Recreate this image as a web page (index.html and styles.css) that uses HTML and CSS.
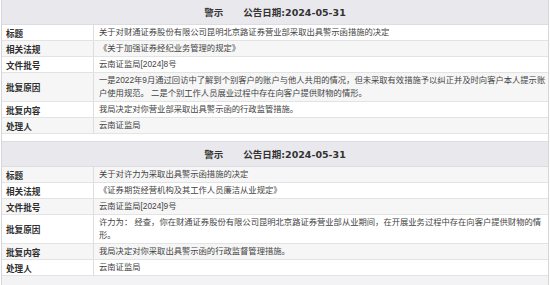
FILE: index.html
```html
<!DOCTYPE html>
<html lang="zh-CN">
<head>
<meta charset="utf-8">
<title>警示公告</title>
<link rel="stylesheet" href="styles.css">
</head>
<body>
<div class="board">
  <section class="notice">
    <div class="notice-head"><span>警示</span><span class="date">公告日期:2024-05-31</span></div>
    <div class="row"><div class="label">标题</div><div class="value">关于对财通证券股份有限公司昆明北京路证券营业部采取出具警示函措施的决定</div></div>
    <div class="row"><div class="label">相关法规</div><div class="value">《关于加强证券经纪业务管理的规定》</div></div>
    <div class="row"><div class="label">文件批号</div><div class="value">云南证监局[2024]8号</div></div>
    <div class="row"><div class="label">批复原因</div><div class="value">一是2022年9月通过回访中了解到个别客户的账户与他人共用的情况，但未采取有效措施予以纠正并及时向客户本人提示账户使用规范。 二是个别工作人员展业过程中存在向客户提供财物的情形。</div></div>
    <div class="row"><div class="label">批复内容</div><div class="value">我局决定对你营业部采取出具警示函的行政监管措施。</div></div>
    <div class="row"><div class="label">处理人</div><div class="value">云南证监局</div></div>
  </section>
  <div class="gap"></div>
  <section class="notice alt">
    <div class="notice-head"><span>警示</span><span class="date">公告日期:2024-05-31</span></div>
    <div class="row"><div class="label">标题</div><div class="value">关于对许力为采取出具警示函措施的决定</div></div>
    <div class="row"><div class="label">相关法规</div><div class="value">《证券期货经营机构及其工作人员廉洁从业规定》</div></div>
    <div class="row"><div class="label">文件批号</div><div class="value">云南证监局[2024]9号</div></div>
    <div class="row"><div class="label">批复原因</div><div class="value">许力为： 经查，你在财通证券股份有限公司昆明北京路证券营业部从业期间，在开展业务过程中存在向客户提供财物的情形。</div></div>
    <div class="row"><div class="label">批复内容</div><div class="value">我局决定对你采取出具警示函的行政监督管理措施。</div></div>
    <div class="row"><div class="label">处理人</div><div class="value">云南证监局</div></div>
  </section>
  <div class="gap-end"></div>
</div>
</body>
</html>
```

FILE: styles.css
```css
html, body {
  margin: 0;
  padding: 0;
  background: #ffffff;
}

body {
  font-family: "Liberation Sans", "Noto Sans CJK SC", sans-serif;
  font-size: 8.3px;
  color: #444444;
}

.board {
  width: 548px;
  margin-left: 1px;
  border-left: 1px solid #d6d6d6;
  border-right: 1px solid #d6d6d6;
  box-sizing: border-box;
  height: 285px;
  overflow: hidden;
}

.notice-head {
  height: 24px;
  border-bottom: 1px solid #dcdce2;
  background: #e8e8ed;
  display: flex;
  justify-content: center;
  align-items: center;
  gap: 20px;
  font-family: "DejaVu Sans", "Noto Sans CJK SC", sans-serif;
  font-size: 9.5px;
  font-weight: bold;
  color: #333333;
}

.row {
  display: flex;
  border-bottom: 1px solid #e3e3e3;
  background: #ffffff;
}

.notice .row:nth-child(odd) {
  background: #f6f6f6;
}

.notice.alt .row:nth-child(odd) {
  background: #ffffff;
}

.notice.alt .row:nth-child(even) {
  background: #f6f6f6;
}

.label {
  width: 92px;
  flex: none;
  box-sizing: border-box;
  border-right: 1px solid #dddddd;
  padding-left: 4px;
  display: flex;
  align-items: center;
  font-weight: bold;
  font-size: 8.6px;
  color: #2f2f2f;
}

.value {
  flex: 1;
  min-width: 0;
  padding: 1px 0 1px 5px;
  line-height: 13px;
}

.gap {
  height: 7px;
  border-bottom: 1px solid #dcdce2;
  background: #ffffff;
}

.gap-end {
  height: 12px;
  background: #f3f3f5;
}
```
